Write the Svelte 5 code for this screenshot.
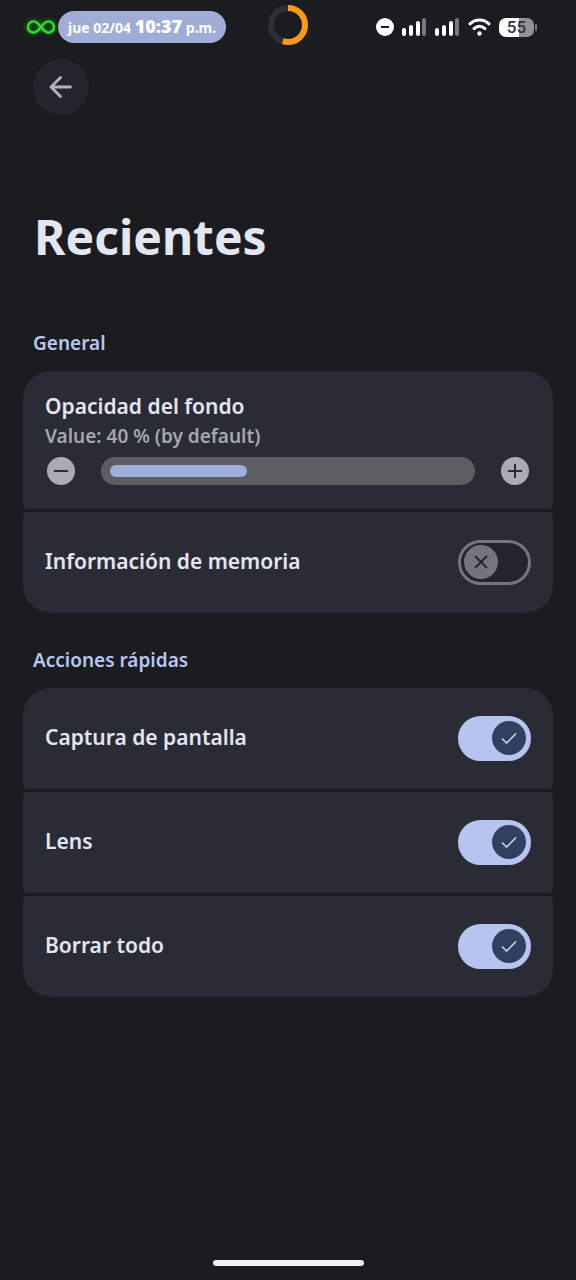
<script lang="ts">
	let opacity = $state(40);
	let memoryInfo = $state(false);

	let actions = $state([
		{ id: "screenshot", label: "Captura de pantalla", enabled: true },
		{ id: "lens", label: "Lens", enabled: true },
		{ id: "clear", label: "Borrar todo", enabled: true },
	]);

	const step = (amount: number) => {
		opacity = Math.min(100, Math.max(0, opacity + amount));
	};
</script>

{#snippet signal()}
	<svg width="25" height="18" viewBox="0 0 25 18" fill="#fff" aria-hidden="true">
		<rect x="0" y="10" width="4" height="8" rx="2" />
		<rect x="7" y="7" width="4" height="11" rx="2" />
		<rect x="14" y="3" width="4" height="15" rx="2" />
		<rect x="20" y="0" width="4" height="18" rx="2" fill="#77787d" />
	</svg>
{/snippet}

{#snippet knobIcon(on: boolean)}
	{#if on}
		<svg class="knob on" viewBox="0 0 34 34" fill="none" stroke="#c3d0f5" stroke-width="1.6" aria-hidden="true">
			<path d="M10 17.5l4.6 4.6L24 12.5" />
		</svg>
	{:else}
		<svg class="knob" viewBox="0 0 34 34" fill="none" stroke="#23262e" stroke-width="1.8" aria-hidden="true">
			<path d="M11 11l12 12M23 11L11 23" />
		</svg>
	{/if}
{/snippet}

<div class="screen">
	<div class="status">
		<div class="left">
			<svg class="infinity" width="30" height="16" viewBox="0 0 30 16" fill="none" stroke="#2fe02f" stroke-width="2.4" aria-hidden="true">
				<path d="M15 8C12 4 10 2.400 7.500 2.400a5.600 5.600 0 0 0 0 11.200C10 13.600 12 12 15 8s5-5.600 7.500-5.600a5.600 5.600 0 0 1 0 11.200C20 13.600 18 12 15 8z" />
			</svg>
			<div class="clock">jue 02/04 <b>10:37</b> p.m.</div>
		</div>
		<svg class="ring" width="40" height="40" viewBox="0 0 40 40" fill="none" stroke-width="6" aria-hidden="true">
			<circle cx="20" cy="20" r="17" stroke="#2f3033" />
			<circle cx="20" cy="20" r="17" stroke="#fb9a12" pathLength="100" stroke-dasharray="55 45" transform="rotate(-90 20 20)" />
		</svg>
		<div class="right">
			<svg width="18" height="18" viewBox="0 0 18 18" aria-hidden="true">
				<circle cx="9" cy="9" r="9" fill="#fff" />
				<path d="M5 9h8" stroke="#1b1c1f" stroke-width="2" />
			</svg>
			<span class="signals">
				{@render signal()}
				{@render signal()}
			</span>
			<svg width="23" height="18" viewBox="0 0 23 18" fill="none" stroke="#fff" stroke-width="3" stroke-linecap="round" aria-hidden="true">
				<path d="M2 5.800C7.500.6 15.500.6 21 5.800" />
				<path d="M6 10.600c3.300-3 7.700-3 11 0" />
				<circle cx="11.500" cy="15.500" r="2.200" fill="#fff" stroke="none" />
			</svg>
			<div class="battery"><span>55</span></div>
		</div>
	</div>

	<button class="back" aria-label="Atrás">
		<svg width="24" height="24" viewBox="0 0 24 24" fill="none" stroke="#b4b6bd" stroke-width="2.8" stroke-linecap="round" stroke-linejoin="round" aria-hidden="true">
			<path d="M21.500 12H2M11.500 2.500L2 12l9.500 9.500" />
		</svg>
	</button>

	<h1>Recientes</h1>

	<section>
		<h2>General</h2>
		<div class="group">
			<div class="card slider-card">
				<label for="opacity">Opacidad del fondo</label>
				<p>Value: {opacity} % (by default)</p>
				<div class="slider">
					<button class="step" aria-label="Menos" onclick={() => step(-5)}>
						<svg width="28" height="28" viewBox="0 0 28 28" stroke="#2a2d36" stroke-width="2" aria-hidden="true">
							<path d="M7 14h14" />
						</svg>
					</button>
					<input id="opacity" type="range" min="0" max="100" bind:value={opacity} style="--fill: {opacity}%" />
					<button class="step" aria-label="Más" onclick={() => step(5)}>
						<svg width="28" height="28" viewBox="0 0 28 28" stroke="#2a2d36" stroke-width="2" aria-hidden="true">
							<path d="M7 14h14M14 7v14" />
						</svg>
					</button>
				</div>
			</div>
			<label class="card row">
				<span class="label">Información de memoria</span>
				<span class="switch">
					<input type="checkbox" role="switch" bind:checked={memoryInfo} />
					{@render knobIcon(memoryInfo)}
				</span>
			</label>
		</div>
	</section>

	<section>
		<h2>Acciones rápidas</h2>
		<div class="group">
			{#each actions as action (action.id)}
				<label class="card row">
					<span class="label">{action.label}</span>
					<span class="switch">
						<input type="checkbox" role="switch" bind:checked={action.enabled} />
						{@render knobIcon(action.enabled)}
					</span>
				</label>
			{/each}
		</div>
	</section>

	<div class="home"></div>
</div>

<style>
	:global(body) {
		margin: 0;
		background: #1b1c1f;
	}

	.screen {
		display: flex;
		flex-direction: column;
		box-sizing: border-box;
		min-height: 100vh;
		padding: 0 23px 14px;
		background: #1b1c1f;
		color: #e3e5f1;
		font-family: "Noto Sans", sans-serif;
		font-weight: 600;
	}

	.status {
		display: grid;
		grid-template-columns: 1fr auto 1fr;
		align-items: center;
		height: 54px;
	}

	.left,
	.right {
		display: flex;
		align-items: center;
	}

	.left {
		gap: 2px;
		padding-left: 3px;
	}

	.right {
		justify-content: flex-end;
		gap: 8px;
		padding-right: 19px;
	}

	.infinity {
		filter: drop-shadow(0 0 2px #12b012);
	}

	.clock {
		padding: 0 10px;
		border-radius: 16px;
		background: #9fadd7;
		color: #fff;
		font-size: 14px;
		font-weight: 700;
		line-height: 31px;
		white-space: nowrap;
	}

	.clock b {
		font-size: 18px;
	}

	.ring {
		padding-bottom: 4px;
	}

	.signals {
		display: flex;
		gap: 8px;
	}

	.battery {
		position: relative;
		width: 35px;
		border-radius: 7px;
		background: linear-gradient(to right, #fff 57%, #929397 57%);
		color: #33343a;
		font-family: Roboto, sans-serif;
		font-size: 17px;
		font-weight: 500;
		line-height: 19px;
		text-align: center;
	}

	.battery::after {
		content: "";
		position: absolute;
		top: 6px;
		right: -3px;
		width: 2px;
		height: 7px;
		border-radius: 1px;
		background: #77787d;
	}

	button {
		display: grid;
		place-items: center;
		padding: 0;
		border: 0;
		border-radius: 50%;
		cursor: pointer;
	}

	.back {
		width: 56px;
		height: 56px;
		margin: 5px 10px 0;
		background: #23262d;
	}

	h1 {
		margin: 88px 11px 0;
		font-size: 48px;
		font-weight: 700;
		line-height: 68px;
	}

	h2 {
		margin: 0 10px;
		color: #b9c7f0;
		font-size: 19px;
		font-weight: 600;
		line-height: 26px;
	}

	section {
		margin-top: 34px;
	}

	h1 + section {
		margin-top: 59px;
	}

	.group {
		display: flex;
		flex-direction: column;
		gap: 3px;
		margin-top: 15px;
	}

	.card {
		box-sizing: border-box;
		padding: 0 22px;
		border-radius: 4px;
		background: #2a2c35;
		font-size: 21px;
		line-height: 30px;
	}

	.card:first-child {
		border-top-left-radius: 28px;
		border-top-right-radius: 28px;
	}

	.card:last-child {
		border-bottom-left-radius: 28px;
		border-bottom-right-radius: 28px;
	}

	.slider-card {
		padding-top: 20px;
		padding-bottom: 24px;
	}

	.slider-card label {
		display: block;
	}

	.slider-card p {
		margin: 1px 0 7px;
		color: #a5a7af;
		font-size: 19px;
		line-height: 28px;
	}

	.slider {
		display: flex;
		align-items: center;
		gap: 26px;
		padding: 0 2px;
	}

	.step {
		flex: none;
		width: 28px;
		height: 28px;
		background: #a9acb5;
	}

	input[type="range"] {
		appearance: none;
		flex: 1;
		box-sizing: border-box;
		min-width: 0;
		height: 28px;
		margin: 0;
		padding: 0 40px 0 9px;
		border-radius: 14px;
		background: #5d5e62;
	}

	input[type="range"]::-webkit-slider-runnable-track {
		height: 12px;
		border-radius: 6px;
		background: linear-gradient(#a0aedb, #a0aedb) 0 0 / var(--fill) 100% no-repeat;
	}

	input[type="range"]::-webkit-slider-thumb {
		appearance: none;
		width: 12px;
		height: 12px;
		border-radius: 6px;
		background: #a0aedb;
	}

	.row {
		display: flex;
		align-items: center;
		justify-content: space-between;
		min-height: 101px;
	}

	.label {
		padding-bottom: 3px;
	}

	.switch {
		position: relative;
		width: 73px;
		height: 45px;
	}

	.switch input {
		appearance: none;
		display: block;
		box-sizing: border-box;
		width: 100%;
		height: 100%;
		margin: 0;
		border: 3px solid #74767e;
		border-radius: 23px;
		background: #22252d;
	}

	.switch input:checked {
		border-color: #b6c5ef;
		background: #b6c5ef;
	}

	/* the knob sits over the checkbox and lets clicks through */
	.knob {
		position: absolute;
		top: 5px;
		left: 6px;
		width: 34px;
		height: 34px;
		border-radius: 50%;
		background: #74767e;
		pointer-events: none;
	}

	.knob.on {
		right: 5px;
		left: auto;
		background: #30405f;
	}

	.home {
		align-self: center;
		width: 151px;
		height: 6px;
		margin-top: auto;
		border-radius: 3px;
		background: #eeeff5;
	}
</style>
